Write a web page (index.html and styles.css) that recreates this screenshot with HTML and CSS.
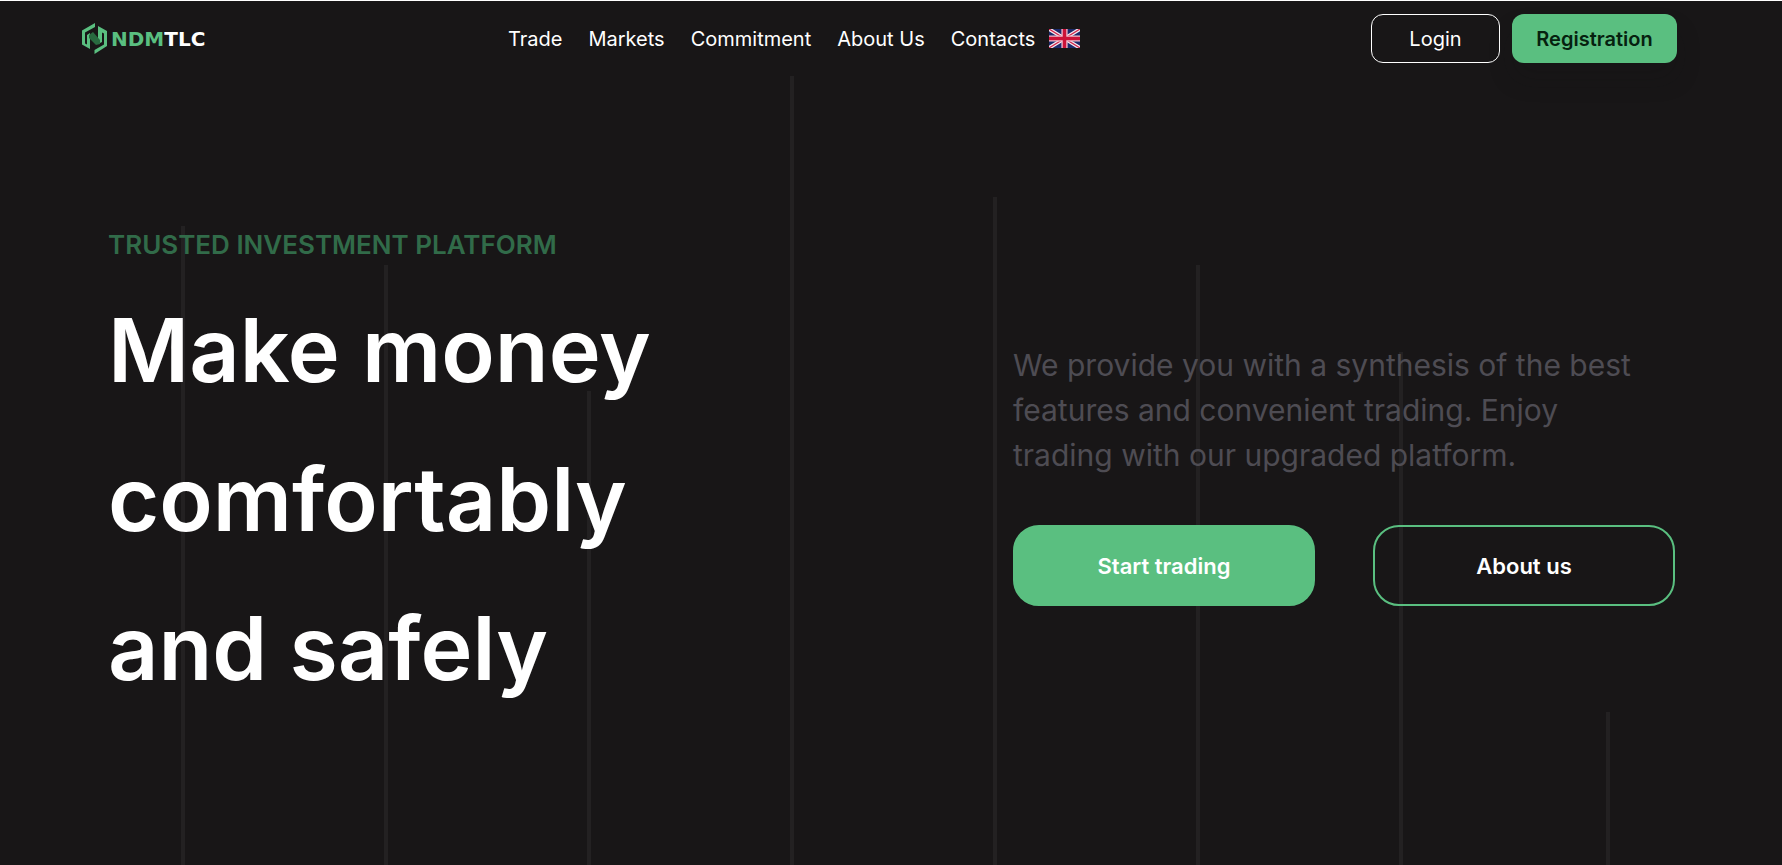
FILE: index.html
```html
<!DOCTYPE html>
<html lang="en">
<head>
<meta charset="utf-8">
<title>NDMTLC</title>
<link rel="stylesheet" href="styles.css">
</head>
<body>
<div class="page">
  <div class="bars" aria-hidden="true">
    <span class="bar bar-1"></span><span class="bar bar-2"></span><span class="bar bar-3"></span><span class="bar bar-4"></span><span class="bar bar-5"></span><span class="bar bar-2"></span><span class="bar bar-7"></span><span class="bar bar-8"></span>
  </div>
  <header class="header">
    <a class="logo" href="#">
      <svg class="logo-mark" viewBox="0 0 25 31" aria-hidden="true">
        <path fill="#5abf80" d="M13 0v4L3 9.500v11L5 21.500V12l3-2v16l-8-4.500V7.500z"/>
        <path fill="#5abf80" d="M12.500 31v-4L22 21.500v-11L20 9.500V19l-4 2V3l9 5v15z"/>
        <path fill="#28693f" d="M7 12l4-3 7 8v4l-4 1-7-7z"/>
      </svg>
      <span class="logo-text">NDM<span class="logo-tail">TLC</span></span>
    </a>
    <nav class="nav">
      <a href="#">Trade</a>
      <a href="#">Markets</a>
      <a href="#">Commitment</a>
      <a href="#">About Us</a>
      <a href="#">Contacts</a>
      <button class="lang" type="button" aria-label="English">
        <svg class="flag" viewBox="0 0 30 19" preserveAspectRatio="none" aria-hidden="true">
          <path fill="#1c2a6b" d="M0 0h30v19H0z"/>
          <path stroke="#f4e9f0" stroke-width="3.600" d="M0 0l30 19M30 0L0 19"/>
          <path stroke="#d0254a" stroke-width="1.200" d="M0 0l30 19M30 0L0 19"/>
          <path stroke="#f0bccd" stroke-width="6" d="M15 0v19M0 9.500h30"/>
          <path stroke="#cc1238" stroke-width="3.400" d="M15 0v19M0 9.500h30"/>
        </svg>
      </button>
    </nav>
    <div class="account">
      <button class="btn-login" type="button">Login</button>
      <button class="btn-register" type="button">Registration</button>
    </div>
  </header>
  <main class="hero">
    <section class="lead">
      <p class="eyebrow">TRUSTED INVESTMENT PLATFORM</p>
      <h1 class="title">Make money<br>comfortably<br>and safely</h1>
    </section>
    <section class="pitch">
      <p class="text">We provide you with a synthesis of the best<br>features and convenient trading. Enjoy<br>trading with our upgraded platform.</p>
      <div class="actions">
        <button class="cta cta-main" type="button">Start trading</button>
        <button class="cta" type="button">About us</button>
      </div>
    </section>
  </main>
</div>
</body>
</html>
```
FILE: styles.css
```css
* { box-sizing: border-box; }
body {
  margin: 0;
  background: #181617;
  color: #fff;
  font-family: Inter, "Open Sans", sans-serif;
}
button { font-family: inherit; cursor: pointer; }
a { color: inherit; text-decoration: none; }

.page {
  position: relative;
  min-height: 100vh;
  overflow: hidden;
  border-top: 1px solid #fff;
}

.bars {
  position: absolute;
  inset: 0;
  display: flex;
  padding-left: 181px;
}
.bar { flex: 0 0 203px; border-left: 4px solid #232122; }
.bar-1 { margin-top: 225px; }
.bar-2 { margin-top: 264px; }
.bar-3 { margin-top: 390px; }
.bar-4 { margin-top: 75px; }
.bar-5 { margin-top: 196px; }
.bar-7 { margin-top: 351px; flex-basis: 207px; }
.bar-8 { margin-top: 711px; }

.header {
  position: relative;
  display: flex;
  justify-content: space-between;
  align-items: center;
  height: 75px;
  padding: 0 105px 0 82px;
}
.logo { display: flex; align-items: center; gap: 4px; }
.logo-mark { width: 25px; height: 31px; }
.logo-text {
  color: #5abf80;
  font: bold 20px "DejaVu Sans", sans-serif;
}
.logo-tail { color: #fff; }

.nav { display: flex; align-items: center; gap: 26px; margin-left: 12px; font-size: 20px; }
.lang { margin-left: -12px; padding: 0; border: 0; background: none; }
.flag { display: block; width: 31px; height: 19px; }

.account { display: flex; gap: 12px; }
.btn-login, .btn-register {
  height: 49px;
  border-radius: 12px;
  font-size: 20px;
}
.btn-login {
  width: 129px;
  border: 1px solid #fff;
  background: none;
  color: #fff;
}
.btn-register {
  width: 165px;
  padding: 0;
  border: 0;
  background: #5abf80;
  color: #06210f;
  font-weight: 600;
  box-shadow: 0 16px 24px rgba(20, 18, 18, .2);
}

.hero {
  position: relative;
  display: grid;
  grid-template-columns: 1fr 662px;
  padding: 151px 107px 0 108px;
}
.eyebrow {
  margin: 0;
  color: #316b49;
  font-size: 26px;
  font-weight: 600;
  line-height: 36px;
}
.title {
  margin: 13px 0 0;
  font-size: 88px;
  font-weight: 600;
  line-height: 149px;
}
.pitch { padding-top: 116px; }
.text {
  margin: 0;
  color: #4e4c53;
  font-size: 30px;
  line-height: 45px;
}
.actions { display: grid; grid-template-columns: 1fr 1fr; gap: 58px; margin-top: 47px; }
.cta {
  height: 81px;
  border: 2px solid #5abf80;
  border-radius: 26px;
  background: none;
  color: #fff;
  font-size: 22px;
  font-weight: 600;
}
.cta-main { background: #5abf80; }
```
